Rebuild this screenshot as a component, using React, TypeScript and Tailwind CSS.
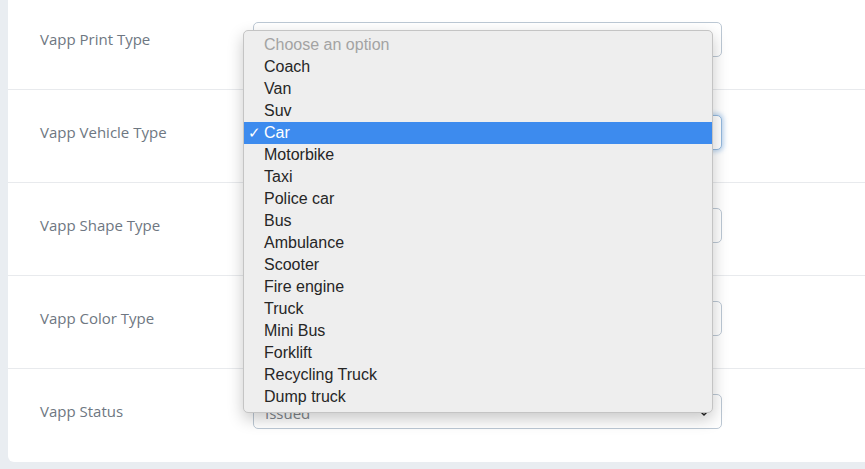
import React from 'react';

const rows = [
  { label: 'Vapp Print Type', value: '' },
  { label: 'Vapp Vehicle Type', value: '', focused: true },
  { label: 'Vapp Shape Type', value: '' },
  { label: 'Vapp Color Type', value: '' },
  { label: 'Vapp Status', value: 'Issued' },
];

const options = [
  'Coach',
  'Van',
  'Suv',
  'Car',
  'Motorbike',
  'Taxi',
  'Police car',
  'Bus',
  'Ambulance',
  'Scooter',
  'Fire engine',
  'Truck',
  'Mini Bus',
  'Forklift',
  'Recycling Truck',
  'Dump truck',
];

const SelectBox = ({ value, focused }: { value: string; focused?: boolean }) => (
  <div
    className={`relative flex h-[35px] w-[469px] items-center rounded-[5px] border bg-white px-[11px] pt-[4px] text-[15px] text-[#80858b] ${
      focused
        ? 'border-[#94b9de] shadow-[0_0_4px_2px_rgba(120,170,225,0.45)]'
        : 'border-[#bcc8d4]'
    }`}
  >
    <span>{value}</span>
    <svg
      className="absolute right-[13px] top-[14px]"
      width="8"
      height="8"
      viewBox="0 0 8 8"
      fill="none"
      stroke="#222"
      strokeWidth="1.5"
    >
      <path d="M1 3 L4 6 L7 3" />
    </svg>
  </div>
);

const App: React.FC = () => {
  return (
    <div className="relative h-[469px] w-[865px] overflow-hidden bg-[#e9edf1] pl-2 font-['Open_Sans',sans-serif]">
      {/* form card */}
      <div className="-mt-[3px] mr-[-20px] rounded-b-md bg-white">
        {rows.map((row, i) => (
          <div
            key={row.label}
            className={`flex items-start pl-8 pt-[25px] ${
              i < rows.length - 1 ? 'border-b border-[#e8eaed] pb-[32px]' : 'pb-[33px]'
            }`}
          >
            <div className="flex h-[35px] w-[213px] items-center text-[15px] text-[#6e7782]">
              {row.label}
            </div>
            <SelectBox value={row.value} focused={row.focused} />
          </div>
        ))}
      </div>

      {/* native dropdown */}
      <div className="absolute left-[243px] top-[30px] w-[470px] rounded-[5px] border border-[#c4c4c4] bg-[#eeeeee] pb-[4px] pt-[3px] font-['Liberation_Sans',Arial,sans-serif] text-[16px] text-[#262626] shadow-[0_6px_16px_rgba(0,0,0,0.22)]">
        <div className="h-[22px] pl-[20px] leading-[22px] text-[#a3a3a3]">Choose an option</div>
        {options.map((opt) => {
          const active = opt === 'Car';
          return (
            <div
              key={opt}
              className={`relative h-[22px] pl-[20px] leading-[22px] ${active ? 'bg-[#3d8bee] text-white' : ''}`}
            >
              {active && <span className="absolute left-[4px] top-0 text-[15px]">✓</span>}
              {opt}
            </div>
          );
        })}
      </div>
    </div>
  );
};

export default App;
